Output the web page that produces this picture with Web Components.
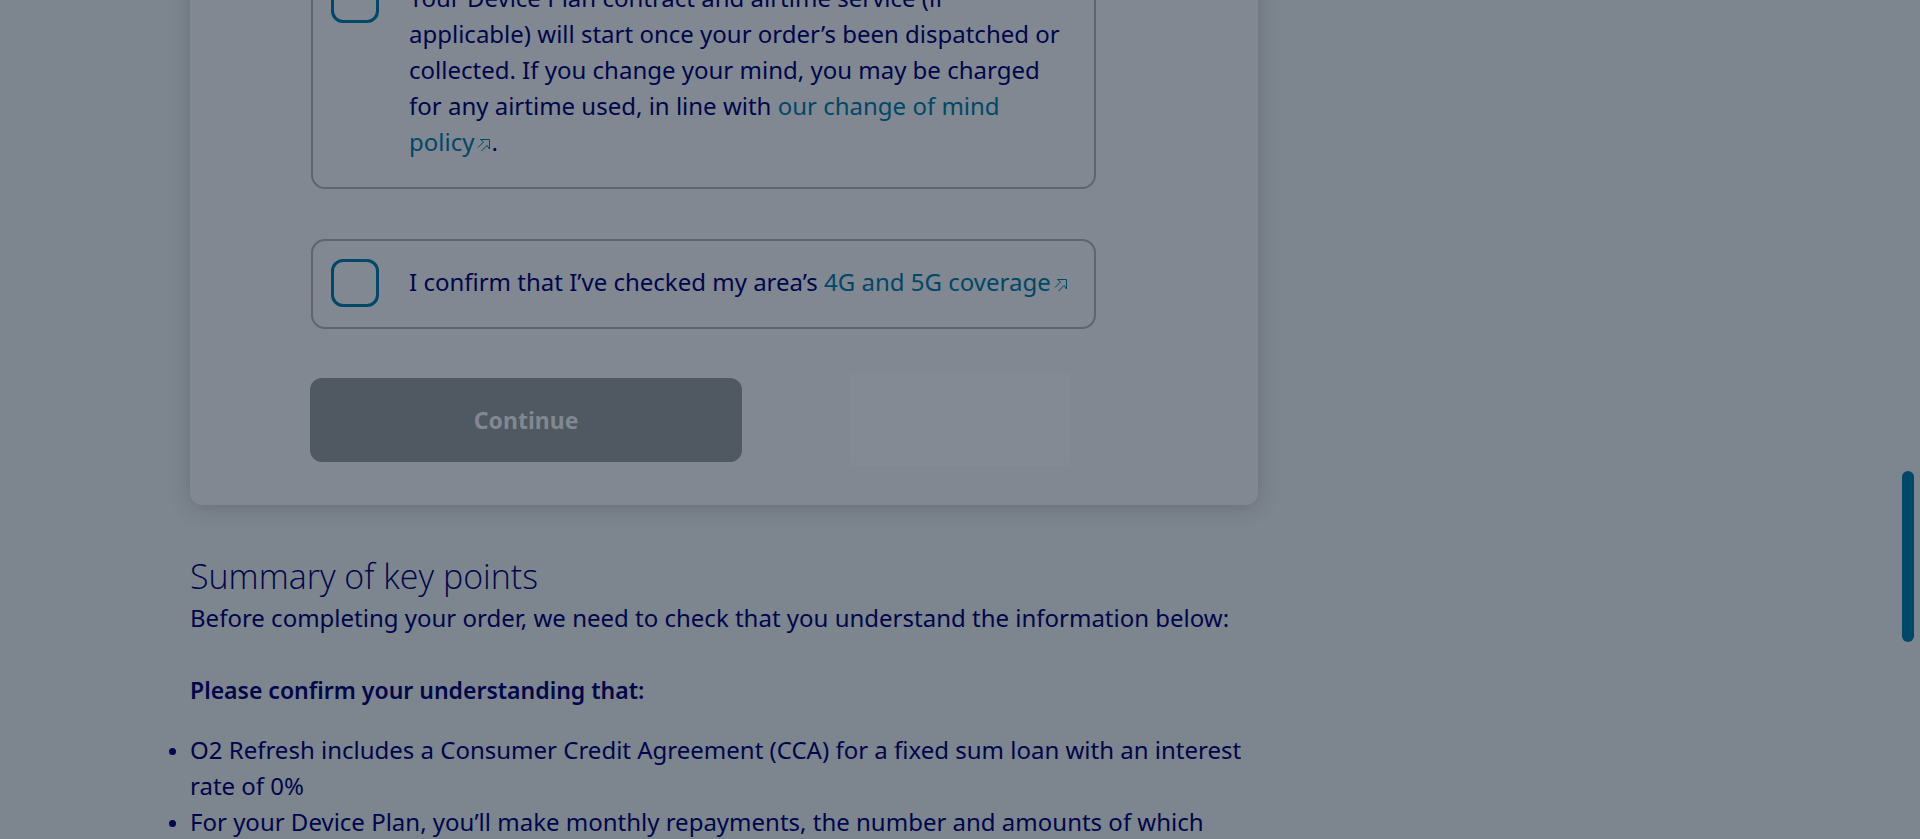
<!DOCTYPE html>
<html lang="en">
<head>
<meta charset="utf-8">
<meta name="viewport" content="width=device-width, initial-scale=1">
<title>Your order</title>
<style>
  :root {
    --page: #7d858e;
    --card: #818891;
    --ink: #00064b;
    --link: #004768;
    --outline: #5d656f;
    --disabled: #505861;
  }
  html, body { margin: 0; height: 100%; overflow: hidden; }
  body {
    background: var(--page);
    color: var(--ink);
    font: 24px/36px "Noto Sans", "Open Sans", sans-serif;
  }
</style>
</head>
<body>
<order-page>
  <order-card>
    <confirm-option name="change-of-mind">Your Device Plan contract and airtime service (if applicable) will start once your order’s been dispatched or collected. If you change your mind, you may be charged for any airtime used, in line with <external-link href="#change-of-mind">our change of mind policy</external-link>.</confirm-option>
    <confirm-option name="coverage">I confirm that I’ve checked my area’s <external-link href="#coverage">4G and 5G coverage</external-link></confirm-option>
    <primary-button slot="action">Continue</primary-button>
  </order-card>
  <key-points>
    <span slot="title">Summary of key points</span>
    <span slot="intro">Before completing your order, we need to check that you understand the information below:</span>
    <span slot="lead">Please confirm your understanding that:</span>
    <key-point>O2 Refresh includes a Consumer Credit Agreement (CCA) for a fixed sum loan with an interest rate of 0%</key-point>
    <key-point>For your Device Plan, you’ll make monthly repayments, the number and amounts of which</key-point>
  </key-points>
</order-page>
<opening-dialog></opening-dialog>
<scroll-thumb></scroll-thumb>

<script>
const define = (tag, html, setup) => customElements.define(tag, class extends HTMLElement {
  constructor() {
    super();
    const template = document.createElement('template');
    template.innerHTML = html;
    this.attachShadow({ mode: 'open' }).append(template.content.cloneNode(true));
  }
  connectedCallback() { if (setup) setup(this, this.shadowRoot); }
});

/* Page grid: main column, with an empty aside on wide windows. The view is part-way down the page. */
define('order-page', `
  <style>
    :host { display: block; }
    main {
      display: grid;
      grid-template-columns: minmax(0, 1068fr) minmax(0, 472fr);
      max-width: 1540px;
      margin: -165px auto 0;
    }
    .column { display: flex; flex-direction: column; gap: 47px; }
  </style>
  <main><div class="column"><slot></slot></div></main>`);

define('order-card', `
  <style>
    :host { display: block; }
    section {
      padding: 120px 120px 43px;
      border-radius: 12px;
      background: var(--card);
      box-shadow: 0 2px 20px rgba(40, 50, 62, .25);
    }
    form { display: flex; flex-direction: column; gap: 49px; max-width: 786px; }
    .options { display: flex; flex-direction: column; gap: 50px; padding-left: 1px; }
  </style>
  <section><form>
    <div class="options"><slot></slot></div>
    <slot name="action"></slot>
  </form></section>`);

define('confirm-option', `
  <style>
    :host { display: block; }
    .box {
      display: grid;
      grid-template-columns: 48px 1fr;
      column-gap: 30px;
      padding: 18px 23px 18px 18px;
      border: 2px solid var(--outline);
      border-radius: 14px;
    }
    input {
      appearance: none;
      box-sizing: border-box;
      width: 48px;
      height: 48px;
      margin: 0;
      border: 3px solid var(--link);
      border-radius: 12px;
    }
    label { padding: 5px 0 9px; }
  </style>
  <div class="box">
    <input type="checkbox" id="choice">
    <label for="choice"><slot></slot></label>
  </div>`, (host, root) => { root.querySelector('input').name = host.getAttribute('name'); });

define('external-link', `
  <style>
    :host { display: inline; }
    a { color: var(--link); text-decoration: none; }
    svg { width: 14px; height: 14px; margin-left: 3px; vertical-align: -1px; }
  </style>
  <a><slot></slot><svg viewBox="0 0 14 14" fill="none" stroke="currentColor" stroke-width="1" aria-hidden="true"><path d="M1 9.5 6.500 4 3.500 1.500H12.500V11L10 7.500 4.500 13"/></svg></a>`,
  (host, root) => { root.querySelector('a').href = host.getAttribute('href'); });

define('primary-button', `
  <style>
    :host { display: block; }
    button {
      width: 55%;
      height: 84px;
      border: 0;
      border-radius: 12px;
      background: var(--disabled);
      color: var(--card);
      font: inherit;
      font-size: 23px;
      font-weight: 700;
    }
  </style>
  <button type="button" disabled><slot></slot></button>`);

define('key-points', `
  <style>
    :host { display: block; }
    h2 { margin: 0; font: 300 34px/48px "Open Sans", "Noto Sans", sans-serif; }
    p { margin: 0; }
    .lead { margin: 36px 0 24px; font-size: 23px; font-weight: 600; }
  </style>
  <section>
    <h2><slot name="title"></slot></h2>
    <p><slot name="intro"></slot></p>
    <p class="lead"><slot name="lead"></slot></p>
    <div role="list"><slot></slot></div>
  </section>`);

define('key-point', `
  <style>
    :host { display: list-item; list-style: disc outside; }
    :host::marker { font-size: 20px; }
  </style>
  <slot></slot>`, host => host.setAttribute('role', 'listitem'));

/* First frame of a dialog that fades and grows in from the centre of the window. */
define('opening-dialog', `
  <style>
    :host { position: fixed; inset: 0; display: grid; place-items: center; pointer-events: none; }
    div { width: 220px; height: 93px; border-radius: 3px; background: #fff; opacity: .02; }
  </style>
  <div role="dialog" aria-label="Loading"></div>`);

define('scroll-thumb', `
  <style>
    :host {
      position: fixed;
      top: 471px;
      right: 6px;
      width: 12px;
      height: 171px;
      border-radius: 6px;
      background: var(--link);
    }
  </style>`);
</script>
</body>
</html>
